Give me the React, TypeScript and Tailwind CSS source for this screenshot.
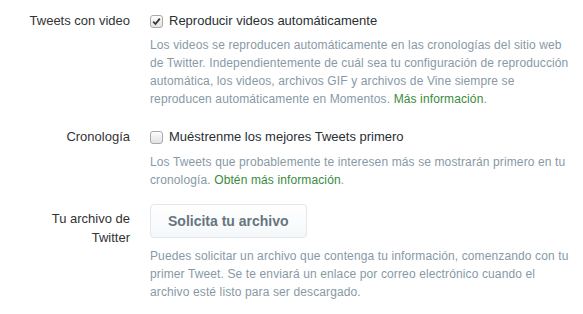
import React from 'react';

function Box({ checked }: { checked?: boolean }) {
  return (
    <span className="flex h-[13px] w-[13px] shrink-0 items-center justify-center rounded-[3px] border border-[#a9a9a9] bg-gradient-to-b from-[#fdfdfd] to-[#e2e2e2]">
      {checked && (
        <svg width="9" height="9" viewBox="0 0 9 9" aria-hidden>
          <path d="M1.2 4.6 L3.5 7 L7.8 1.6" fill="none" stroke="#333" strokeWidth="1.8" />
        </svg>
      )}
    </span>
  );
}

function Row({
  label,
  children,
  className = '',
}: {
  label: React.ReactNode;
  children: React.ReactNode;
  className?: string;
}) {
  return (
    <div className={`grid grid-cols-[130px_420px] gap-x-5 ${className}`}>
      <div className="text-right text-[13px] leading-[19px] text-[#333]">{label}</div>
      <div>{children}</div>
    </div>
  );
}

const help = 'text-[12px] leading-[18px] tracking-[0.12px] text-[#8899a6]';
const link = 'text-[#3a8a40]';

export default function App() {
  return (
    <div className="h-[314px] w-[583px] bg-white pt-[11px] font-['Liberation_Sans',Arial,sans-serif]">
      <Row label={<span className="block leading-[20px]">Tweets con video</span>}>
        <label className="flex h-5 items-center gap-[6px] text-[13px] text-[#292f33]">
          <Box checked />
          Reproducir videos automáticamente
        </label>
        <p className={`mt-[5px] ${help}`}>
          Los videos se reproducen automáticamente en las cronologías del sitio web de Twitter.
          Independientemente de cuál sea tu configuración de reproducción automática, los videos,
          archivos GIF y archivos de Vine siempre se reproducen automáticamente en Momentos.{' '}
          <a className={link}>Más información</a>.
        </p>
      </Row>

      <Row className="mt-[19px]" label={<span className="block leading-[20px]">Cronología</span>}>
        <label className="flex h-5 items-center gap-[6px] text-[13px] text-[#292f33]">
          <Box />
          Muéstrenme los mejores Tweets primero
        </label>
        <p className={`mt-[6px] ${help}`}>
          Los Tweets que probablemente te interesen más se mostrarán primero en tu cronología.{' '}
          <a className={link}>Obtén más información</a>.
        </p>
      </Row>

      <Row
        className="mt-[15px]"
        label={
          <span className="block pt-[5px]">
            Tu archivo de
            <br />
            Twitter
          </span>
        }
      >
        <button className="h-[34px] rounded-[4px] border border-[#e1e8ed] bg-gradient-to-b from-white to-[#f5f8fa] px-[17px] text-[14px] font-bold text-[#66757f]">
          Solicita tu archivo
        </button>
        <p className={`mt-[9px] ${help}`}>
          Puedes solicitar un archivo que contenga tu información, comenzando con tu primer Tweet.
          Se te enviará un enlace por correo electrónico cuando el archivo esté listo para ser
          descargado.
        </p>
      </Row>
    </div>
  );
}
